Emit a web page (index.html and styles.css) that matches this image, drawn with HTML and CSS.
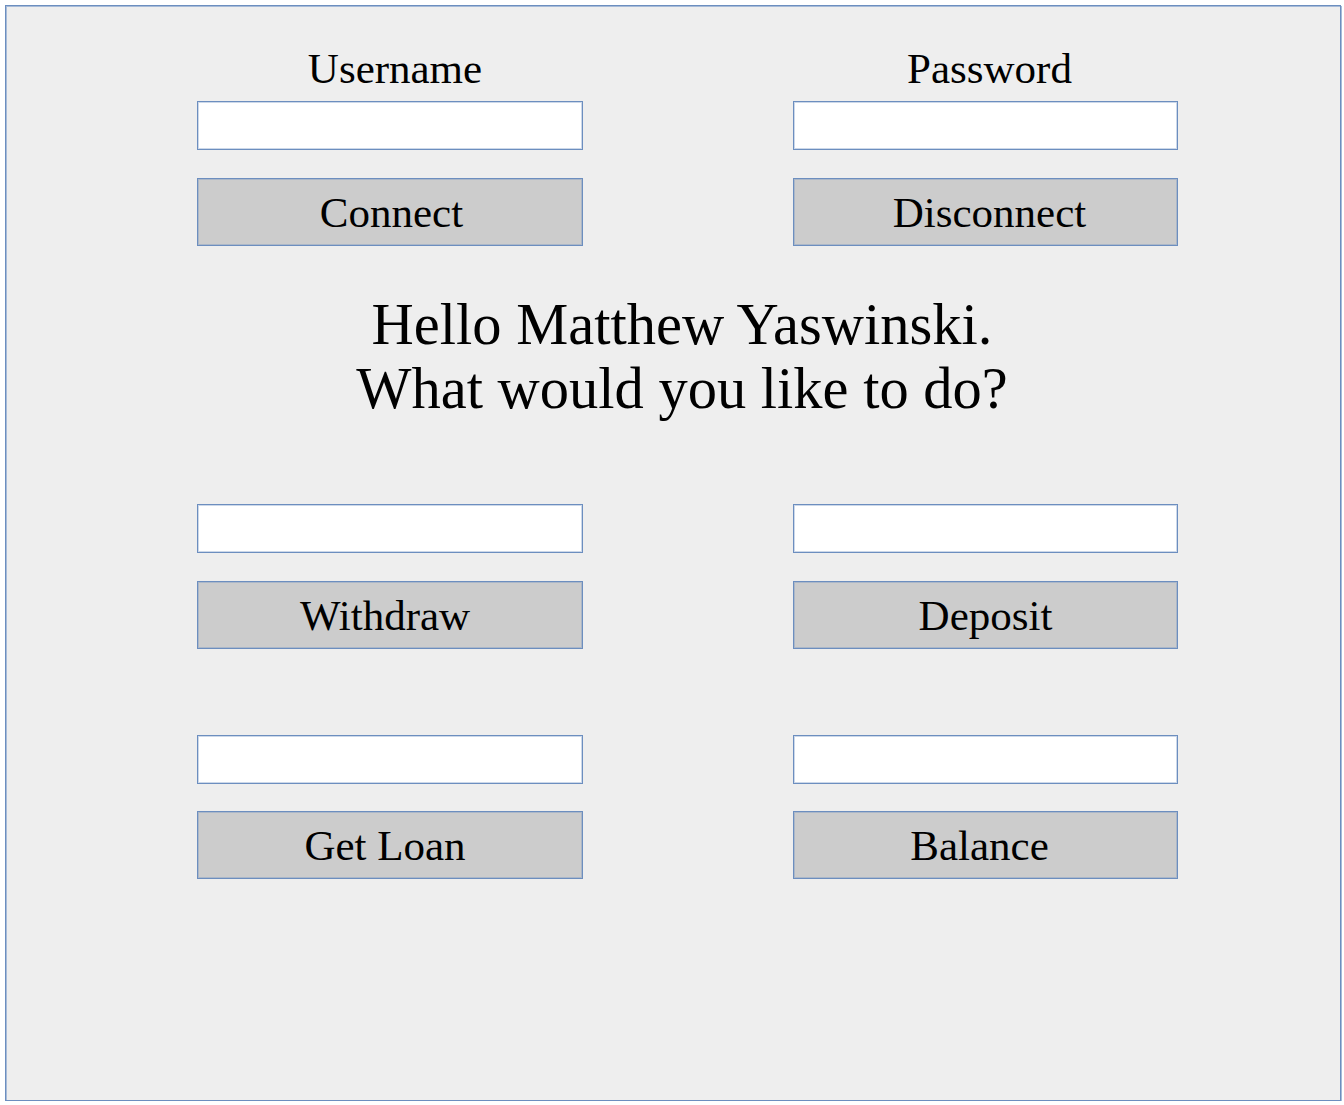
FILE: index.html
```html
<!DOCTYPE html>
<html lang="en">
<head>
<meta charset="utf-8">
<title>Bank</title>
<link rel="stylesheet" href="styles.css">
</head>
<body>
<div class="frame">
  <div class="pair top">
    <div class="col">
      <div class="label label-left">Username</div>
      <div class="field"></div>
      <div class="btn btn-connect">Connect</div>
    </div>
    <div class="col">
      <div class="label label-right">Password</div>
      <div class="field"></div>
      <div class="btn btn-disconnect">Disconnect</div>
    </div>
  </div>
  <div class="greeting">Hello Matthew Yaswinski.<br>What would you like to do?</div>
  <div class="pair mid">
    <div class="col">
      <div class="field"></div>
      <div class="btn btn-left">Withdraw</div>
    </div>
    <div class="col">
      <div class="field"></div>
      <div class="btn">Deposit</div>
    </div>
  </div>
  <div class="pair bottom">
    <div class="col">
      <div class="field"></div>
      <div class="btn btn-left">Get Loan</div>
    </div>
    <div class="col">
      <div class="field"></div>
      <div class="btn btn-balance">Balance</div>
    </div>
  </div>
</div>
</body>
</html>
```
FILE: styles.css
```css
html, body {
  margin: 0;
  padding: 0;
  background: #ffffff;
}
body {
  font-family: "Liberation Serif", "Times New Roman", serif;
  color: #000000;
}
.frame {
  box-sizing: border-box;
  margin: 5px 0 0 5px;
  width: 1336px;
  height: 1096px;
  border: 1px solid #6c8ebf;
  box-shadow: inset 1px 1px 0 #a7bbd8, 1px 1px 0 #a7bbd8;
  background: #eeeeee;
  padding: 39px 0 0 191px;
  display: flex;
  flex-direction: column;
}
.pair {
  display: grid;
  grid-template-columns: 386px 385px;
  column-gap: 210px;
}
.col {
  display: flex;
  flex-direction: column;
}
.label {
  font-size: 43px;
  line-height: 48px;
  height: 48px;
  text-align: center;
  margin-bottom: 8px;
}
.label-left { padding-left: 10px; }
.label-right { padding-left: 8px; }
.field {
  box-sizing: border-box;
  height: 49px;
  background: #ffffff;
  border: 1px solid #6c8ebf;
  box-shadow: inset 0 0 0 1px rgba(108, 142, 191, 0.35);
  margin-bottom: 28px;
}
.btn {
  box-sizing: border-box;
  height: 68px;
  background: #cccccc;
  border: 1px solid #6c8ebf;
  box-shadow: inset 0 0 0 1px rgba(108, 142, 191, 0.35);
  font-size: 43px;
  display: flex;
  align-items: center;
  justify-content: center;
  line-height: 1;
}
.btn-connect { padding-left: 3px; }
.btn-disconnect { padding-left: 8px; }
.btn-left { padding-right: 10px; }
.btn-balance { padding-right: 12px; }
.greeting {
  margin-top: 47px;
  margin-left: -191px;
  width: 1334px;
  padding-left: 18px;
  box-sizing: border-box;
  font-size: 58.5px;
  line-height: 64px;
  text-align: center;
}
.mid { margin-top: 83px; }
.bottom { margin-top: 86px; }
.bottom .field { margin-bottom: 27px; }
```
